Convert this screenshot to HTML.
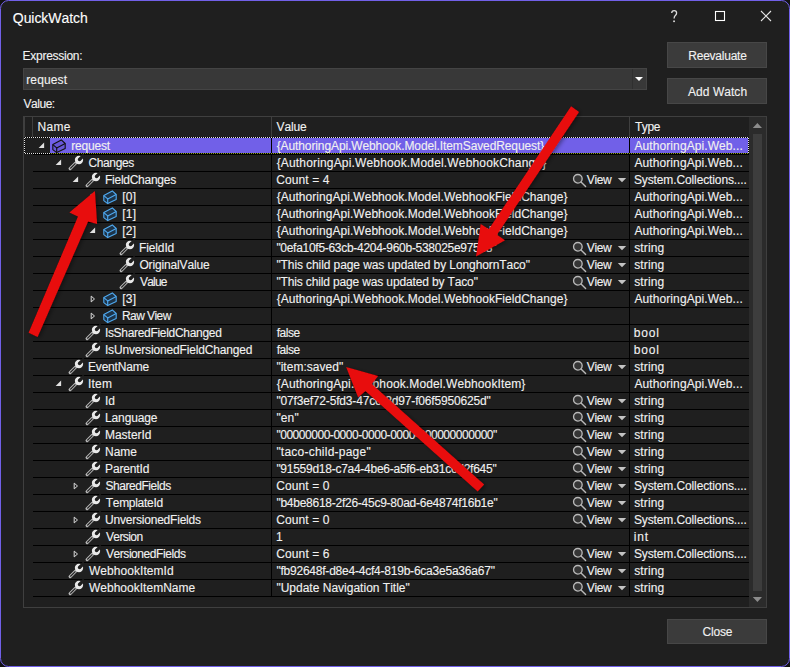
<!DOCTYPE html>
<html><head><meta charset="utf-8"><style>
html,body{margin:0;padding:0;width:790px;height:667px;overflow:hidden;background:#121212;}
svg{position:absolute;left:0;top:0;}
text{font-family:"Liberation Sans", sans-serif;font-kerning:none;white-space:pre;stroke:#f1f1f1;stroke-width:0.12px;}
</style></head><body>
<svg width="790" height="667" viewBox="0 0 790 667">
<rect x="0.5" y="0.5" width="789" height="666" rx="8" ry="8" fill="#1f1f1f" stroke="#7160e8" stroke-width="1"/>
<rect x="23" y="68" width="624" height="22" fill="#444444"/><rect x="24" y="69" width="622" height="20" fill="#383838"/><rect x="632" y="69" width="1" height="20" fill="#2f2f2f"/><rect x="667" y="42" width="100" height="26" fill="#474747"/><rect x="668" y="43" width="98" height="24" fill="#3b3b3b"/><rect x="667" y="78" width="100" height="26" fill="#474747"/><rect x="668" y="79" width="98" height="24" fill="#3b3b3b"/><rect x="667" y="619" width="100" height="25" fill="#474747"/><rect x="668" y="620" width="98" height="23" fill="#3b3b3b"/><rect x="23" y="116" width="744" height="492" fill="#3f3f3f"/><rect x="24" y="117" width="742" height="490" fill="#1f1f1f"/><rect x="24" y="117" width="1" height="20" fill="#3f3f3f"/><rect x="32" y="117" width="1" height="20" fill="#3f3f3f"/><rect x="271" y="117" width="1" height="20" fill="#3f3f3f"/><rect x="629" y="117" width="1" height="20" fill="#3f3f3f"/><rect x="749" y="117" width="17" height="490" fill="#2b2b2b"/><rect x="753" y="134" width="9" height="457" fill="#3d3d3d"/><rect x="50" y="138" width="699" height="16" fill="#7160e8"/><rect x="33" y="154" width="716" height="1" fill="#000000"/><rect x="271" y="137" width="1" height="17" fill="#000000"/><rect x="629" y="137" width="1" height="17" fill="#000000"/><rect x="33" y="171" width="716" height="1" fill="#000000"/><rect x="271" y="154" width="1" height="17" fill="#000000"/><rect x="629" y="154" width="1" height="17" fill="#000000"/><rect x="33" y="188" width="716" height="1" fill="#000000"/><rect x="271" y="171" width="1" height="17" fill="#000000"/><rect x="629" y="171" width="1" height="17" fill="#000000"/><rect x="33" y="205" width="716" height="1" fill="#000000"/><rect x="271" y="188" width="1" height="17" fill="#000000"/><rect x="629" y="188" width="1" height="17" fill="#000000"/><rect x="33" y="222" width="716" height="1" fill="#000000"/><rect x="271" y="205" width="1" height="17" fill="#000000"/><rect x="629" y="205" width="1" height="17" fill="#000000"/><rect x="33" y="239" width="716" height="1" fill="#000000"/><rect x="271" y="222" width="1" height="17" fill="#000000"/><rect x="629" y="222" width="1" height="17" fill="#000000"/><rect x="33" y="256" width="716" height="1" fill="#000000"/><rect x="271" y="239" width="1" height="17" fill="#000000"/><rect x="629" y="239" width="1" height="17" fill="#000000"/><rect x="33" y="273" width="716" height="1" fill="#000000"/><rect x="271" y="256" width="1" height="17" fill="#000000"/><rect x="629" y="256" width="1" height="17" fill="#000000"/><rect x="33" y="290" width="716" height="1" fill="#000000"/><rect x="271" y="273" width="1" height="17" fill="#000000"/><rect x="629" y="273" width="1" height="17" fill="#000000"/><rect x="33" y="307" width="716" height="1" fill="#000000"/><rect x="271" y="290" width="1" height="17" fill="#000000"/><rect x="629" y="290" width="1" height="17" fill="#000000"/><rect x="33" y="324" width="716" height="1" fill="#000000"/><rect x="271" y="307" width="1" height="17" fill="#000000"/><rect x="629" y="307" width="1" height="17" fill="#000000"/><rect x="33" y="341" width="716" height="1" fill="#000000"/><rect x="271" y="324" width="1" height="17" fill="#000000"/><rect x="629" y="324" width="1" height="17" fill="#000000"/><rect x="33" y="358" width="716" height="1" fill="#000000"/><rect x="271" y="341" width="1" height="17" fill="#000000"/><rect x="629" y="341" width="1" height="17" fill="#000000"/><rect x="33" y="375" width="716" height="1" fill="#000000"/><rect x="271" y="358" width="1" height="17" fill="#000000"/><rect x="629" y="358" width="1" height="17" fill="#000000"/><rect x="33" y="392" width="716" height="1" fill="#000000"/><rect x="271" y="375" width="1" height="17" fill="#000000"/><rect x="629" y="375" width="1" height="17" fill="#000000"/><rect x="33" y="409" width="716" height="1" fill="#000000"/><rect x="271" y="392" width="1" height="17" fill="#000000"/><rect x="629" y="392" width="1" height="17" fill="#000000"/><rect x="33" y="426" width="716" height="1" fill="#000000"/><rect x="271" y="409" width="1" height="17" fill="#000000"/><rect x="629" y="409" width="1" height="17" fill="#000000"/><rect x="33" y="443" width="716" height="1" fill="#000000"/><rect x="271" y="426" width="1" height="17" fill="#000000"/><rect x="629" y="426" width="1" height="17" fill="#000000"/><rect x="33" y="460" width="716" height="1" fill="#000000"/><rect x="271" y="443" width="1" height="17" fill="#000000"/><rect x="629" y="443" width="1" height="17" fill="#000000"/><rect x="33" y="477" width="716" height="1" fill="#000000"/><rect x="271" y="460" width="1" height="17" fill="#000000"/><rect x="629" y="460" width="1" height="17" fill="#000000"/><rect x="33" y="494" width="716" height="1" fill="#000000"/><rect x="271" y="477" width="1" height="17" fill="#000000"/><rect x="629" y="477" width="1" height="17" fill="#000000"/><rect x="33" y="511" width="716" height="1" fill="#000000"/><rect x="271" y="494" width="1" height="17" fill="#000000"/><rect x="629" y="494" width="1" height="17" fill="#000000"/><rect x="33" y="528" width="716" height="1" fill="#000000"/><rect x="271" y="511" width="1" height="17" fill="#000000"/><rect x="629" y="511" width="1" height="17" fill="#000000"/><rect x="33" y="545" width="716" height="1" fill="#000000"/><rect x="271" y="528" width="1" height="17" fill="#000000"/><rect x="629" y="528" width="1" height="17" fill="#000000"/><rect x="33" y="562" width="716" height="1" fill="#000000"/><rect x="271" y="545" width="1" height="17" fill="#000000"/><rect x="629" y="545" width="1" height="17" fill="#000000"/><rect x="33" y="579" width="716" height="1" fill="#000000"/><rect x="271" y="562" width="1" height="17" fill="#000000"/><rect x="629" y="562" width="1" height="17" fill="#000000"/><rect x="33" y="596" width="716" height="1" fill="#000000"/><rect x="271" y="579" width="1" height="17" fill="#000000"/><rect x="629" y="579" width="1" height="17" fill="#000000"/>
<g fill="none" stroke="#dedede" stroke-width="1.3"><path d="M671.7 13 Q671.8 10.6 674.2 10.6 Q676.6 10.6 676.6 13 Q676.6 14.5 675.3 15.6 Q674.1 16.6 674.1 18.6"/></g>
<rect x="673.2" y="20.5" width="1.7" height="1.6" fill="#dedede"/>
<rect x="715.5" y="11.5" width="9" height="9" fill="none" stroke="#ffffff" stroke-width="1.1"/>
<path d="M761 11 L771 21 M771 11 L761 21" stroke="#e6e6e6" stroke-width="1.1"/>
<polygon points="635,77 643,77 639,81" fill="#ffffff"/><polygon points="752.8,128 762,128 757.4,122.9" fill="#8c8c8c"/><polygon points="752.8,597 762,597 757.4,602.1" fill="#8c8c8c"/><polygon points="44.1,142.6 44.1,147.9 38.6,147.9" fill="#e2e2e2"/><polygon points="61.1,159.6 61.1,164.9 55.6,164.9" fill="#e2e2e2"/><polygon points="78.1,176.6 78.1,181.9 72.6,181.9" fill="#e2e2e2"/><polygon points="617.8,178 626.2,178 622,182.2" fill="#c4c4c4"/><polygon points="91.2,194.1 94.5,197 91.2,199.9" fill="none" stroke="#dadada" stroke-width="1.0"/><polygon points="91.2,211.1 94.5,214 91.2,216.9" fill="none" stroke="#dadada" stroke-width="1.0"/><polygon points="95.1,227.6 95.1,232.9 89.6,232.9" fill="#e2e2e2"/><polygon points="617.8,246 626.2,246 622,250.2" fill="#c4c4c4"/><polygon points="617.8,263 626.2,263 622,267.2" fill="#c4c4c4"/><polygon points="617.8,280 626.2,280 622,284.2" fill="#c4c4c4"/><polygon points="91.2,296.1 94.5,299 91.2,301.9" fill="none" stroke="#dadada" stroke-width="1.0"/><polygon points="91.2,313.1 94.5,316 91.2,318.9" fill="none" stroke="#dadada" stroke-width="1.0"/><polygon points="617.8,365 626.2,365 622,369.2" fill="#c4c4c4"/><polygon points="61.1,380.6 61.1,385.9 55.6,385.9" fill="#e2e2e2"/><polygon points="617.8,399 626.2,399 622,403.2" fill="#c4c4c4"/><polygon points="617.8,416 626.2,416 622,420.2" fill="#c4c4c4"/><polygon points="617.8,433 626.2,433 622,437.2" fill="#c4c4c4"/><polygon points="617.8,450 626.2,450 622,454.2" fill="#c4c4c4"/><polygon points="617.8,467 626.2,467 622,471.2" fill="#c4c4c4"/><polygon points="74.2,483.1 77.5,486 74.2,488.9" fill="none" stroke="#dadada" stroke-width="1.0"/><polygon points="617.8,484 626.2,484 622,488.2" fill="#c4c4c4"/><polygon points="617.8,501 626.2,501 622,505.2" fill="#c4c4c4"/><polygon points="74.2,517.1 77.5,520 74.2,522.9" fill="none" stroke="#dadada" stroke-width="1.0"/><polygon points="617.8,518 626.2,518 622,522.2" fill="#c4c4c4"/><polygon points="74.2,551.1 77.5,554 74.2,556.9" fill="none" stroke="#dadada" stroke-width="1.0"/><polygon points="617.8,552 626.2,552 622,556.2" fill="#c4c4c4"/><polygon points="617.8,569 626.2,569 622,573.2" fill="#c4c4c4"/><polygon points="617.8,586 626.2,586 622,590.2" fill="#c4c4c4"/>
<g transform="translate(52,137)"><polygon points="0.8,7.6 9.3,2.9 13.2,6.5 13.2,11.5 4.7,15.6 0.8,12.6" fill="#6756d6" stroke="#101010" stroke-width="1.1" stroke-linejoin="round"/><polyline points="0.8,7.6 4.7,10.9 13.2,6.5" fill="none" stroke="#101010" stroke-width="1.1" stroke-linejoin="round"/><line x1="4.7" y1="10.9" x2="4.7" y2="15.6" stroke="#101010" stroke-width="1.1"/></g><g transform="translate(69,154)"><path d="M1.1 14.7 L6.6 9.2" stroke="#b5b5b5" stroke-width="3.1" stroke-linecap="round"/><path d="M1.3 14.5 L6.4 9.4" stroke="#1f1f1f" stroke-width="1.1"/><circle cx="10" cy="6" r="4.15" fill="#e8e8e8"/><circle cx="10.5" cy="5.5" r="1.65" fill="#1f1f1f"/><path d="M10.5 5.5 L15.2 0.8" stroke="#1f1f1f" stroke-width="3.3"/></g><g transform="translate(86,171)"><path d="M1.1 14.7 L6.6 9.2" stroke="#b5b5b5" stroke-width="3.1" stroke-linecap="round"/><path d="M1.3 14.5 L6.4 9.4" stroke="#1f1f1f" stroke-width="1.1"/><circle cx="10" cy="6" r="4.15" fill="#e8e8e8"/><circle cx="10.5" cy="5.5" r="1.65" fill="#1f1f1f"/><path d="M10.5 5.5 L15.2 0.8" stroke="#1f1f1f" stroke-width="3.3"/></g><g transform="translate(572,171)"><circle cx="5.85" cy="7.8" r="4.3" fill="#363636" stroke="#b8b8b8" stroke-width="1.35"/><path d="M9 11 L13.6 15.6" stroke="#b8b8b8" stroke-width="1.4" stroke-linecap="round"/></g><g transform="translate(103,188)"><polygon points="0.8,7.6 9.3,2.9 13.2,6.5 13.2,11.5 4.7,15.6 0.8,12.6" fill="#1d3449" stroke="#4fa9f0" stroke-width="1.1" stroke-linejoin="round"/><polyline points="0.8,7.6 4.7,10.9 13.2,6.5" fill="none" stroke="#4fa9f0" stroke-width="1.1" stroke-linejoin="round"/><line x1="4.7" y1="10.9" x2="4.7" y2="15.6" stroke="#4fa9f0" stroke-width="1.1"/></g><g transform="translate(103,205)"><polygon points="0.8,7.6 9.3,2.9 13.2,6.5 13.2,11.5 4.7,15.6 0.8,12.6" fill="#1d3449" stroke="#4fa9f0" stroke-width="1.1" stroke-linejoin="round"/><polyline points="0.8,7.6 4.7,10.9 13.2,6.5" fill="none" stroke="#4fa9f0" stroke-width="1.1" stroke-linejoin="round"/><line x1="4.7" y1="10.9" x2="4.7" y2="15.6" stroke="#4fa9f0" stroke-width="1.1"/></g><g transform="translate(103,222)"><polygon points="0.8,7.6 9.3,2.9 13.2,6.5 13.2,11.5 4.7,15.6 0.8,12.6" fill="#1d3449" stroke="#4fa9f0" stroke-width="1.1" stroke-linejoin="round"/><polyline points="0.8,7.6 4.7,10.9 13.2,6.5" fill="none" stroke="#4fa9f0" stroke-width="1.1" stroke-linejoin="round"/><line x1="4.7" y1="10.9" x2="4.7" y2="15.6" stroke="#4fa9f0" stroke-width="1.1"/></g><g transform="translate(120,239)"><path d="M1.1 14.7 L6.6 9.2" stroke="#b5b5b5" stroke-width="3.1" stroke-linecap="round"/><path d="M1.3 14.5 L6.4 9.4" stroke="#1f1f1f" stroke-width="1.1"/><circle cx="10" cy="6" r="4.15" fill="#e8e8e8"/><circle cx="10.5" cy="5.5" r="1.65" fill="#1f1f1f"/><path d="M10.5 5.5 L15.2 0.8" stroke="#1f1f1f" stroke-width="3.3"/></g><g transform="translate(572,239)"><circle cx="5.85" cy="7.8" r="4.3" fill="#363636" stroke="#b8b8b8" stroke-width="1.35"/><path d="M9 11 L13.6 15.6" stroke="#b8b8b8" stroke-width="1.4" stroke-linecap="round"/></g><g transform="translate(120,256)"><path d="M1.1 14.7 L6.6 9.2" stroke="#b5b5b5" stroke-width="3.1" stroke-linecap="round"/><path d="M1.3 14.5 L6.4 9.4" stroke="#1f1f1f" stroke-width="1.1"/><circle cx="10" cy="6" r="4.15" fill="#e8e8e8"/><circle cx="10.5" cy="5.5" r="1.65" fill="#1f1f1f"/><path d="M10.5 5.5 L15.2 0.8" stroke="#1f1f1f" stroke-width="3.3"/></g><g transform="translate(572,256)"><circle cx="5.85" cy="7.8" r="4.3" fill="#363636" stroke="#b8b8b8" stroke-width="1.35"/><path d="M9 11 L13.6 15.6" stroke="#b8b8b8" stroke-width="1.4" stroke-linecap="round"/></g><g transform="translate(120,273)"><path d="M1.1 14.7 L6.6 9.2" stroke="#b5b5b5" stroke-width="3.1" stroke-linecap="round"/><path d="M1.3 14.5 L6.4 9.4" stroke="#1f1f1f" stroke-width="1.1"/><circle cx="10" cy="6" r="4.15" fill="#e8e8e8"/><circle cx="10.5" cy="5.5" r="1.65" fill="#1f1f1f"/><path d="M10.5 5.5 L15.2 0.8" stroke="#1f1f1f" stroke-width="3.3"/></g><g transform="translate(572,273)"><circle cx="5.85" cy="7.8" r="4.3" fill="#363636" stroke="#b8b8b8" stroke-width="1.35"/><path d="M9 11 L13.6 15.6" stroke="#b8b8b8" stroke-width="1.4" stroke-linecap="round"/></g><g transform="translate(103,290)"><polygon points="0.8,7.6 9.3,2.9 13.2,6.5 13.2,11.5 4.7,15.6 0.8,12.6" fill="#1d3449" stroke="#4fa9f0" stroke-width="1.1" stroke-linejoin="round"/><polyline points="0.8,7.6 4.7,10.9 13.2,6.5" fill="none" stroke="#4fa9f0" stroke-width="1.1" stroke-linejoin="round"/><line x1="4.7" y1="10.9" x2="4.7" y2="15.6" stroke="#4fa9f0" stroke-width="1.1"/></g><g transform="translate(103,307)"><polygon points="0.8,7.6 9.3,2.9 13.2,6.5 13.2,11.5 4.7,15.6 0.8,12.6" fill="#1d3449" stroke="#4fa9f0" stroke-width="1.1" stroke-linejoin="round"/><polyline points="0.8,7.6 4.7,10.9 13.2,6.5" fill="none" stroke="#4fa9f0" stroke-width="1.1" stroke-linejoin="round"/><line x1="4.7" y1="10.9" x2="4.7" y2="15.6" stroke="#4fa9f0" stroke-width="1.1"/></g><g transform="translate(86,324)"><path d="M1.1 14.7 L6.6 9.2" stroke="#b5b5b5" stroke-width="3.1" stroke-linecap="round"/><path d="M1.3 14.5 L6.4 9.4" stroke="#1f1f1f" stroke-width="1.1"/><circle cx="10" cy="6" r="4.15" fill="#e8e8e8"/><circle cx="10.5" cy="5.5" r="1.65" fill="#1f1f1f"/><path d="M10.5 5.5 L15.2 0.8" stroke="#1f1f1f" stroke-width="3.3"/></g><g transform="translate(86,341)"><path d="M1.1 14.7 L6.6 9.2" stroke="#b5b5b5" stroke-width="3.1" stroke-linecap="round"/><path d="M1.3 14.5 L6.4 9.4" stroke="#1f1f1f" stroke-width="1.1"/><circle cx="10" cy="6" r="4.15" fill="#e8e8e8"/><circle cx="10.5" cy="5.5" r="1.65" fill="#1f1f1f"/><path d="M10.5 5.5 L15.2 0.8" stroke="#1f1f1f" stroke-width="3.3"/></g><g transform="translate(69,358)"><path d="M1.1 14.7 L6.6 9.2" stroke="#b5b5b5" stroke-width="3.1" stroke-linecap="round"/><path d="M1.3 14.5 L6.4 9.4" stroke="#1f1f1f" stroke-width="1.1"/><circle cx="10" cy="6" r="4.15" fill="#e8e8e8"/><circle cx="10.5" cy="5.5" r="1.65" fill="#1f1f1f"/><path d="M10.5 5.5 L15.2 0.8" stroke="#1f1f1f" stroke-width="3.3"/></g><g transform="translate(572,358)"><circle cx="5.85" cy="7.8" r="4.3" fill="#363636" stroke="#b8b8b8" stroke-width="1.35"/><path d="M9 11 L13.6 15.6" stroke="#b8b8b8" stroke-width="1.4" stroke-linecap="round"/></g><g transform="translate(69,375)"><path d="M1.1 14.7 L6.6 9.2" stroke="#b5b5b5" stroke-width="3.1" stroke-linecap="round"/><path d="M1.3 14.5 L6.4 9.4" stroke="#1f1f1f" stroke-width="1.1"/><circle cx="10" cy="6" r="4.15" fill="#e8e8e8"/><circle cx="10.5" cy="5.5" r="1.65" fill="#1f1f1f"/><path d="M10.5 5.5 L15.2 0.8" stroke="#1f1f1f" stroke-width="3.3"/></g><g transform="translate(86,392)"><path d="M1.1 14.7 L6.6 9.2" stroke="#b5b5b5" stroke-width="3.1" stroke-linecap="round"/><path d="M1.3 14.5 L6.4 9.4" stroke="#1f1f1f" stroke-width="1.1"/><circle cx="10" cy="6" r="4.15" fill="#e8e8e8"/><circle cx="10.5" cy="5.5" r="1.65" fill="#1f1f1f"/><path d="M10.5 5.5 L15.2 0.8" stroke="#1f1f1f" stroke-width="3.3"/></g><g transform="translate(572,392)"><circle cx="5.85" cy="7.8" r="4.3" fill="#363636" stroke="#b8b8b8" stroke-width="1.35"/><path d="M9 11 L13.6 15.6" stroke="#b8b8b8" stroke-width="1.4" stroke-linecap="round"/></g><g transform="translate(86,409)"><path d="M1.1 14.7 L6.6 9.2" stroke="#b5b5b5" stroke-width="3.1" stroke-linecap="round"/><path d="M1.3 14.5 L6.4 9.4" stroke="#1f1f1f" stroke-width="1.1"/><circle cx="10" cy="6" r="4.15" fill="#e8e8e8"/><circle cx="10.5" cy="5.5" r="1.65" fill="#1f1f1f"/><path d="M10.5 5.5 L15.2 0.8" stroke="#1f1f1f" stroke-width="3.3"/></g><g transform="translate(572,409)"><circle cx="5.85" cy="7.8" r="4.3" fill="#363636" stroke="#b8b8b8" stroke-width="1.35"/><path d="M9 11 L13.6 15.6" stroke="#b8b8b8" stroke-width="1.4" stroke-linecap="round"/></g><g transform="translate(86,426)"><path d="M1.1 14.7 L6.6 9.2" stroke="#b5b5b5" stroke-width="3.1" stroke-linecap="round"/><path d="M1.3 14.5 L6.4 9.4" stroke="#1f1f1f" stroke-width="1.1"/><circle cx="10" cy="6" r="4.15" fill="#e8e8e8"/><circle cx="10.5" cy="5.5" r="1.65" fill="#1f1f1f"/><path d="M10.5 5.5 L15.2 0.8" stroke="#1f1f1f" stroke-width="3.3"/></g><g transform="translate(572,426)"><circle cx="5.85" cy="7.8" r="4.3" fill="#363636" stroke="#b8b8b8" stroke-width="1.35"/><path d="M9 11 L13.6 15.6" stroke="#b8b8b8" stroke-width="1.4" stroke-linecap="round"/></g><g transform="translate(86,443)"><path d="M1.1 14.7 L6.6 9.2" stroke="#b5b5b5" stroke-width="3.1" stroke-linecap="round"/><path d="M1.3 14.5 L6.4 9.4" stroke="#1f1f1f" stroke-width="1.1"/><circle cx="10" cy="6" r="4.15" fill="#e8e8e8"/><circle cx="10.5" cy="5.5" r="1.65" fill="#1f1f1f"/><path d="M10.5 5.5 L15.2 0.8" stroke="#1f1f1f" stroke-width="3.3"/></g><g transform="translate(572,443)"><circle cx="5.85" cy="7.8" r="4.3" fill="#363636" stroke="#b8b8b8" stroke-width="1.35"/><path d="M9 11 L13.6 15.6" stroke="#b8b8b8" stroke-width="1.4" stroke-linecap="round"/></g><g transform="translate(86,460)"><path d="M1.1 14.7 L6.6 9.2" stroke="#b5b5b5" stroke-width="3.1" stroke-linecap="round"/><path d="M1.3 14.5 L6.4 9.4" stroke="#1f1f1f" stroke-width="1.1"/><circle cx="10" cy="6" r="4.15" fill="#e8e8e8"/><circle cx="10.5" cy="5.5" r="1.65" fill="#1f1f1f"/><path d="M10.5 5.5 L15.2 0.8" stroke="#1f1f1f" stroke-width="3.3"/></g><g transform="translate(572,460)"><circle cx="5.85" cy="7.8" r="4.3" fill="#363636" stroke="#b8b8b8" stroke-width="1.35"/><path d="M9 11 L13.6 15.6" stroke="#b8b8b8" stroke-width="1.4" stroke-linecap="round"/></g><g transform="translate(86,477)"><path d="M1.1 14.7 L6.6 9.2" stroke="#b5b5b5" stroke-width="3.1" stroke-linecap="round"/><path d="M1.3 14.5 L6.4 9.4" stroke="#1f1f1f" stroke-width="1.1"/><circle cx="10" cy="6" r="4.15" fill="#e8e8e8"/><circle cx="10.5" cy="5.5" r="1.65" fill="#1f1f1f"/><path d="M10.5 5.5 L15.2 0.8" stroke="#1f1f1f" stroke-width="3.3"/></g><g transform="translate(572,477)"><circle cx="5.85" cy="7.8" r="4.3" fill="#363636" stroke="#b8b8b8" stroke-width="1.35"/><path d="M9 11 L13.6 15.6" stroke="#b8b8b8" stroke-width="1.4" stroke-linecap="round"/></g><g transform="translate(86,494)"><path d="M1.1 14.7 L6.6 9.2" stroke="#b5b5b5" stroke-width="3.1" stroke-linecap="round"/><path d="M1.3 14.5 L6.4 9.4" stroke="#1f1f1f" stroke-width="1.1"/><circle cx="10" cy="6" r="4.15" fill="#e8e8e8"/><circle cx="10.5" cy="5.5" r="1.65" fill="#1f1f1f"/><path d="M10.5 5.5 L15.2 0.8" stroke="#1f1f1f" stroke-width="3.3"/></g><g transform="translate(572,494)"><circle cx="5.85" cy="7.8" r="4.3" fill="#363636" stroke="#b8b8b8" stroke-width="1.35"/><path d="M9 11 L13.6 15.6" stroke="#b8b8b8" stroke-width="1.4" stroke-linecap="round"/></g><g transform="translate(86,511)"><path d="M1.1 14.7 L6.6 9.2" stroke="#b5b5b5" stroke-width="3.1" stroke-linecap="round"/><path d="M1.3 14.5 L6.4 9.4" stroke="#1f1f1f" stroke-width="1.1"/><circle cx="10" cy="6" r="4.15" fill="#e8e8e8"/><circle cx="10.5" cy="5.5" r="1.65" fill="#1f1f1f"/><path d="M10.5 5.5 L15.2 0.8" stroke="#1f1f1f" stroke-width="3.3"/></g><g transform="translate(572,511)"><circle cx="5.85" cy="7.8" r="4.3" fill="#363636" stroke="#b8b8b8" stroke-width="1.35"/><path d="M9 11 L13.6 15.6" stroke="#b8b8b8" stroke-width="1.4" stroke-linecap="round"/></g><g transform="translate(86,528)"><path d="M1.1 14.7 L6.6 9.2" stroke="#b5b5b5" stroke-width="3.1" stroke-linecap="round"/><path d="M1.3 14.5 L6.4 9.4" stroke="#1f1f1f" stroke-width="1.1"/><circle cx="10" cy="6" r="4.15" fill="#e8e8e8"/><circle cx="10.5" cy="5.5" r="1.65" fill="#1f1f1f"/><path d="M10.5 5.5 L15.2 0.8" stroke="#1f1f1f" stroke-width="3.3"/></g><g transform="translate(86,545)"><path d="M1.1 14.7 L6.6 9.2" stroke="#b5b5b5" stroke-width="3.1" stroke-linecap="round"/><path d="M1.3 14.5 L6.4 9.4" stroke="#1f1f1f" stroke-width="1.1"/><circle cx="10" cy="6" r="4.15" fill="#e8e8e8"/><circle cx="10.5" cy="5.5" r="1.65" fill="#1f1f1f"/><path d="M10.5 5.5 L15.2 0.8" stroke="#1f1f1f" stroke-width="3.3"/></g><g transform="translate(572,545)"><circle cx="5.85" cy="7.8" r="4.3" fill="#363636" stroke="#b8b8b8" stroke-width="1.35"/><path d="M9 11 L13.6 15.6" stroke="#b8b8b8" stroke-width="1.4" stroke-linecap="round"/></g><g transform="translate(69,562)"><path d="M1.1 14.7 L6.6 9.2" stroke="#b5b5b5" stroke-width="3.1" stroke-linecap="round"/><path d="M1.3 14.5 L6.4 9.4" stroke="#1f1f1f" stroke-width="1.1"/><circle cx="10" cy="6" r="4.15" fill="#e8e8e8"/><circle cx="10.5" cy="5.5" r="1.65" fill="#1f1f1f"/><path d="M10.5 5.5 L15.2 0.8" stroke="#1f1f1f" stroke-width="3.3"/></g><g transform="translate(572,562)"><circle cx="5.85" cy="7.8" r="4.3" fill="#363636" stroke="#b8b8b8" stroke-width="1.35"/><path d="M9 11 L13.6 15.6" stroke="#b8b8b8" stroke-width="1.4" stroke-linecap="round"/></g><g transform="translate(69,579)"><path d="M1.1 14.7 L6.6 9.2" stroke="#b5b5b5" stroke-width="3.1" stroke-linecap="round"/><path d="M1.3 14.5 L6.4 9.4" stroke="#1f1f1f" stroke-width="1.1"/><circle cx="10" cy="6" r="4.15" fill="#e8e8e8"/><circle cx="10.5" cy="5.5" r="1.65" fill="#1f1f1f"/><path d="M10.5 5.5 L15.2 0.8" stroke="#1f1f1f" stroke-width="3.3"/></g><g transform="translate(572,579)"><circle cx="5.85" cy="7.8" r="4.3" fill="#363636" stroke="#b8b8b8" stroke-width="1.35"/><path d="M9 11 L13.6 15.6" stroke="#b8b8b8" stroke-width="1.4" stroke-linecap="round"/></g>
<defs>
<pattern id="dh" patternUnits="userSpaceOnUse" x="25" y="0" width="2" height="1"><rect x="0" y="0" width="1" height="1" fill="#e0e0e0"/><rect x="1" y="0" width="1" height="1" fill="#000"/></pattern>
<pattern id="dho" patternUnits="userSpaceOnUse" x="25" y="0" width="2" height="1"><rect x="0" y="0" width="1" height="1" fill="#8e9f17"/><rect x="1" y="0" width="1" height="1" fill="#000"/></pattern>
<pattern id="dv" patternUnits="userSpaceOnUse" x="0" y="138" width="1" height="2"><rect x="0" y="0" width="1" height="1" fill="#e0e0e0"/><rect x="0" y="1" width="1" height="1" fill="#000"/></pattern>
</defs>
<rect x="24" y="137" width="725" height="1" fill="url(#dh)"/>
<rect x="24" y="153" width="26" height="1" fill="url(#dh)"/>
<rect x="50" y="153" width="699" height="1" fill="url(#dho)"/>
<rect x="24" y="137" width="1" height="17" fill="url(#dv)"/>
<rect x="748" y="137" width="1" height="17" fill="url(#dv)"/>
<text x="12.84" y="23" style="font-size:14px;fill:#ffffff;letter-spacing:-0.066px">QuickWatch</text>
<text x="22.52" y="60" style="font-size:12px;fill:#f1f1f1;letter-spacing:-0.262px">Expression:</text>
<text x="26.20" y="84" style="font-size:12px;fill:#f1f1f1;letter-spacing:0.143px">request</text>
<text x="23.45" y="108" style="font-size:12px;fill:#f1f1f1;letter-spacing:-0.455px">Value:</text>
<text x="688.32" y="60" style="font-size:12px;fill:#f1f1f1;letter-spacing:-0.243px">Reevaluate</text>
<text x="688.08" y="96" style="font-size:12px;fill:#f1f1f1;letter-spacing:0.039px">Add Watch</text>
<text x="702.39" y="636" style="font-size:12px;fill:#f1f1f1;letter-spacing:-0.159px">Close</text>
<text x="37.42" y="131" style="font-size:12px;fill:#f1f1f1;letter-spacing:0.336px">Name</text>
<text x="276.55" y="131" style="font-size:12px;fill:#f1f1f1;letter-spacing:-0.151px">Value</text>
<text x="634.93" y="131" style="font-size:12px;fill:#f1f1f1;letter-spacing:-0.392px">Type</text>
<text x="71.20" y="150" style="font-size:12px;fill:#f1f1f1;letter-spacing:-0.190px">request</text>
<text x="276.70" y="150" style="font-size:12px;fill:#f1f1f1;letter-spacing:-0.106px">{AuthoringApi.Webhook.Model.ItemSavedRequest}</text>
<text x="634.48" y="150" style="font-size:12px;fill:#f1f1f1;letter-spacing:0.089px">AuthoringApi.Web...</text>
<text x="88.39" y="167" style="font-size:12px;fill:#f1f1f1;letter-spacing:-0.349px">Changes</text>
<text x="276.70" y="167" style="font-size:12px;fill:#f1f1f1;letter-spacing:0.163px">{AuthoringApi.Webhook.Model.WebhookChange}</text>
<text x="634.48" y="167" style="font-size:12px;fill:#f1f1f1;letter-spacing:0.089px">AuthoringApi.Web...</text>
<text x="105.02" y="184" style="font-size:12px;fill:#f1f1f1;letter-spacing:-0.266px">FieldChanges</text>
<text x="276.29" y="184" style="font-size:12px;fill:#f1f1f1;letter-spacing:0.086px">Count = 4</text>
<text x="586.75" y="184" style="font-size:12px;fill:#f1f1f1;letter-spacing:-0.329px">View</text>
<text x="633.96" y="184" style="font-size:12px;fill:#f1f1f1;letter-spacing:-0.120px">System.Collections....</text>
<text x="122.14" y="201" style="font-size:12px;fill:#f1f1f1;letter-spacing:0.285px">[0]</text>
<text x="276.70" y="201" style="font-size:12px;fill:#f1f1f1;letter-spacing:0.041px">{AuthoringApi.Webhook.Model.WebhookFieldChange}</text>
<text x="634.48" y="201" style="font-size:12px;fill:#f1f1f1;letter-spacing:0.089px">AuthoringApi.Web...</text>
<text x="122.14" y="218" style="font-size:12px;fill:#f1f1f1;letter-spacing:0.285px">[1]</text>
<text x="276.70" y="218" style="font-size:12px;fill:#f1f1f1;letter-spacing:0.041px">{AuthoringApi.Webhook.Model.WebhookFieldChange}</text>
<text x="634.48" y="218" style="font-size:12px;fill:#f1f1f1;letter-spacing:0.089px">AuthoringApi.Web...</text>
<text x="122.14" y="235" style="font-size:12px;fill:#f1f1f1;letter-spacing:0.285px">[2]</text>
<text x="276.70" y="235" style="font-size:12px;fill:#f1f1f1;letter-spacing:0.041px">{AuthoringApi.Webhook.Model.WebhookFieldChange}</text>
<text x="634.48" y="235" style="font-size:12px;fill:#f1f1f1;letter-spacing:0.089px">AuthoringApi.Web...</text>
<text x="139.02" y="252" style="font-size:12px;fill:#f1f1f1;letter-spacing:-0.127px">FieldId</text>
<text x="276.39" y="252" style="font-size:12px;fill:#f1f1f1;letter-spacing:-0.286px">&quot;0efa10f5-63cb-4204-960b-538025e975b8&quot;</text>
<text x="586.75" y="252" style="font-size:12px;fill:#f1f1f1;letter-spacing:-0.329px">View</text>
<text x="634.17" y="252" style="font-size:12px;fill:#f1f1f1;letter-spacing:0.133px">string</text>
<text x="139.43" y="269" style="font-size:12px;fill:#f1f1f1;letter-spacing:-0.153px">OriginalValue</text>
<text x="276.39" y="269" style="font-size:12px;fill:#f1f1f1;letter-spacing:-0.087px">&quot;This child page was updated by LonghornTaco&quot;</text>
<text x="586.75" y="269" style="font-size:12px;fill:#f1f1f1;letter-spacing:-0.329px">View</text>
<text x="634.17" y="269" style="font-size:12px;fill:#f1f1f1;letter-spacing:0.133px">string</text>
<text x="139.95" y="286" style="font-size:12px;fill:#f1f1f1;letter-spacing:-0.776px">Value</text>
<text x="276.39" y="286" style="font-size:12px;fill:#f1f1f1;letter-spacing:-0.142px">&quot;This child page was updated by Taco&quot;</text>
<text x="586.75" y="286" style="font-size:12px;fill:#f1f1f1;letter-spacing:-0.329px">View</text>
<text x="634.17" y="286" style="font-size:12px;fill:#f1f1f1;letter-spacing:0.133px">string</text>
<text x="122.14" y="303" style="font-size:12px;fill:#f1f1f1;letter-spacing:0.285px">[3]</text>
<text x="276.70" y="303" style="font-size:12px;fill:#f1f1f1;letter-spacing:0.041px">{AuthoringApi.Webhook.Model.WebhookFieldChange}</text>
<text x="634.48" y="303" style="font-size:12px;fill:#f1f1f1;letter-spacing:0.089px">AuthoringApi.Web...</text>
<text x="122.02" y="320" style="font-size:12px;fill:#f1f1f1;letter-spacing:-0.571px">Raw View</text>
<text x="104.89" y="337" style="font-size:12px;fill:#f1f1f1;letter-spacing:-0.304px">IsSharedFieldChanged</text>
<text x="276.73" y="337" style="font-size:12px;fill:#f1f1f1;letter-spacing:-0.461px">false</text>
<text x="633.73" y="337" style="font-size:12px;fill:#f1f1f1;letter-spacing:0.796px">bool</text>
<text x="104.89" y="354" style="font-size:12px;fill:#f1f1f1;letter-spacing:-0.160px">IsUnversionedFieldChanged</text>
<text x="276.73" y="354" style="font-size:12px;fill:#f1f1f1;letter-spacing:-0.461px">false</text>
<text x="633.73" y="354" style="font-size:12px;fill:#f1f1f1;letter-spacing:0.796px">bool</text>
<text x="88.02" y="371" style="font-size:12px;fill:#f1f1f1;letter-spacing:-0.197px">EventName</text>
<text x="276.39" y="371" style="font-size:12px;fill:#f1f1f1;letter-spacing:0.025px">&quot;item:saved&quot;</text>
<text x="586.75" y="371" style="font-size:12px;fill:#f1f1f1;letter-spacing:-0.329px">View</text>
<text x="634.17" y="371" style="font-size:12px;fill:#f1f1f1;letter-spacing:0.133px">string</text>
<text x="87.89" y="388" style="font-size:12px;fill:#f1f1f1;letter-spacing:0.254px">Item</text>
<text x="276.70" y="388" style="font-size:12px;fill:#f1f1f1;letter-spacing:0.115px">{AuthoringApi.Webhook.Model.WebhookItem}</text>
<text x="634.48" y="388" style="font-size:12px;fill:#f1f1f1;letter-spacing:0.089px">AuthoringApi.Web...</text>
<text x="104.89" y="405" style="font-size:12px;fill:#f1f1f1;letter-spacing:0.073px">Id</text>
<text x="276.39" y="405" style="font-size:12px;fill:#f1f1f1;letter-spacing:-0.170px">&quot;07f3ef72-5fd3-47c0-8d97-f06f5950625d&quot;</text>
<text x="586.75" y="405" style="font-size:12px;fill:#f1f1f1;letter-spacing:-0.329px">View</text>
<text x="634.17" y="405" style="font-size:12px;fill:#f1f1f1;letter-spacing:0.133px">string</text>
<text x="105.02" y="422" style="font-size:12px;fill:#f1f1f1;letter-spacing:-0.125px">Language</text>
<text x="276.39" y="422" style="font-size:12px;fill:#f1f1f1;letter-spacing:0.151px">&quot;en&quot;</text>
<text x="586.75" y="422" style="font-size:12px;fill:#f1f1f1;letter-spacing:-0.329px">View</text>
<text x="634.17" y="422" style="font-size:12px;fill:#f1f1f1;letter-spacing:0.133px">string</text>
<text x="105.02" y="439" style="font-size:12px;fill:#f1f1f1;letter-spacing:-0.032px">MasterId</text>
<text x="276.39" y="439" style="font-size:12px;fill:#f1f1f1;letter-spacing:-0.463px">&quot;00000000-0000-0000-0000-000000000000&quot;</text>
<text x="586.75" y="439" style="font-size:12px;fill:#f1f1f1;letter-spacing:-0.329px">View</text>
<text x="634.17" y="439" style="font-size:12px;fill:#f1f1f1;letter-spacing:0.133px">string</text>
<text x="105.02" y="456" style="font-size:12px;fill:#f1f1f1;letter-spacing:-0.031px">Name</text>
<text x="276.39" y="456" style="font-size:12px;fill:#f1f1f1;letter-spacing:0.234px">&quot;taco-child-page&quot;</text>
<text x="586.75" y="456" style="font-size:12px;fill:#f1f1f1;letter-spacing:-0.329px">View</text>
<text x="634.17" y="456" style="font-size:12px;fill:#f1f1f1;letter-spacing:0.133px">string</text>
<text x="105.02" y="473" style="font-size:12px;fill:#f1f1f1;letter-spacing:-0.144px">ParentId</text>
<text x="276.39" y="473" style="font-size:12px;fill:#f1f1f1;letter-spacing:-0.263px">&quot;91559d18-c7a4-4be6-a5f6-eb31c0d2f645&quot;</text>
<text x="586.75" y="473" style="font-size:12px;fill:#f1f1f1;letter-spacing:-0.329px">View</text>
<text x="634.17" y="473" style="font-size:12px;fill:#f1f1f1;letter-spacing:0.133px">string</text>
<text x="105.46" y="490" style="font-size:12px;fill:#f1f1f1;letter-spacing:-0.448px">SharedFields</text>
<text x="276.29" y="490" style="font-size:12px;fill:#f1f1f1;letter-spacing:0.101px">Count = 0</text>
<text x="586.75" y="490" style="font-size:12px;fill:#f1f1f1;letter-spacing:-0.329px">View</text>
<text x="633.96" y="490" style="font-size:12px;fill:#f1f1f1;letter-spacing:-0.120px">System.Collections....</text>
<text x="105.73" y="507" style="font-size:12px;fill:#f1f1f1;letter-spacing:-0.287px">TemplateId</text>
<text x="276.39" y="507" style="font-size:12px;fill:#f1f1f1;letter-spacing:-0.254px">&quot;b4be8618-2f26-45c9-80ad-6e4874f16b1e&quot;</text>
<text x="586.75" y="507" style="font-size:12px;fill:#f1f1f1;letter-spacing:-0.329px">View</text>
<text x="634.17" y="507" style="font-size:12px;fill:#f1f1f1;letter-spacing:0.133px">string</text>
<text x="105.07" y="524" style="font-size:12px;fill:#f1f1f1;letter-spacing:-0.214px">UnversionedFields</text>
<text x="276.29" y="524" style="font-size:12px;fill:#f1f1f1;letter-spacing:0.101px">Count = 0</text>
<text x="586.75" y="524" style="font-size:12px;fill:#f1f1f1;letter-spacing:-0.329px">View</text>
<text x="633.96" y="524" style="font-size:12px;fill:#f1f1f1;letter-spacing:-0.120px">System.Collections....</text>
<text x="105.95" y="541" style="font-size:12px;fill:#f1f1f1;letter-spacing:-0.593px">Version</text>
<text x="275.99" y="541" style="font-size:12px;fill:#f1f1f1">1</text>
<text x="633.70" y="541" style="font-size:12px;fill:#f1f1f1;letter-spacing:0.908px">int</text>
<text x="105.95" y="558" style="font-size:12px;fill:#f1f1f1;letter-spacing:-0.433px">VersionedFields</text>
<text x="276.29" y="558" style="font-size:12px;fill:#f1f1f1;letter-spacing:0.108px">Count = 6</text>
<text x="586.75" y="558" style="font-size:12px;fill:#f1f1f1;letter-spacing:-0.329px">View</text>
<text x="633.96" y="558" style="font-size:12px;fill:#f1f1f1;letter-spacing:-0.120px">System.Collections....</text>
<text x="88.95" y="575" style="font-size:12px;fill:#f1f1f1;letter-spacing:0.057px">WebhookItemId</text>
<text x="276.39" y="575" style="font-size:12px;fill:#f1f1f1;letter-spacing:-0.221px">&quot;fb92648f-d8e4-4cf4-819b-6ca3e5a36a67&quot;</text>
<text x="586.75" y="575" style="font-size:12px;fill:#f1f1f1;letter-spacing:-0.329px">View</text>
<text x="634.17" y="575" style="font-size:12px;fill:#f1f1f1;letter-spacing:0.133px">string</text>
<text x="88.95" y="592" style="font-size:12px;fill:#f1f1f1;letter-spacing:0.017px">WebhookItemName</text>
<text x="276.39" y="592" style="font-size:12px;fill:#f1f1f1;letter-spacing:0.007px">&quot;Update Navigation Title&quot;</text>
<text x="586.75" y="592" style="font-size:12px;fill:#f1f1f1;letter-spacing:-0.329px">View</text>
<text x="634.17" y="592" style="font-size:12px;fill:#f1f1f1;letter-spacing:0.133px">string</text>
<filter id="sh" x="-20%" y="-20%" width="140%" height="140%"><feDropShadow dx="2" dy="1" stdDeviation="2.2" flood-color="#000" flood-opacity="0.4"/></filter>
<g filter="url(#sh)">
<polygon points="28.6,332.7 37.6,336.9 88.1,221.4 97.1,224.0 94.9,191.0 69.4,212.4 78.0,216.5" fill="#e8090a"/>
<polygon points="571.1,106.2 579.0,111.9 496.9,234.7 505.0,240.3 476.0,256.4 480.7,223.9 488.8,229.3" fill="#e8090a"/>
<polygon points="484.1,484.4 477.7,491.5 365.4,391.1 358.2,397.5 346.1,367.1 378.1,376.1 371.7,384.0" fill="#e8090a"/>
</g>
</svg>
</body></html>
